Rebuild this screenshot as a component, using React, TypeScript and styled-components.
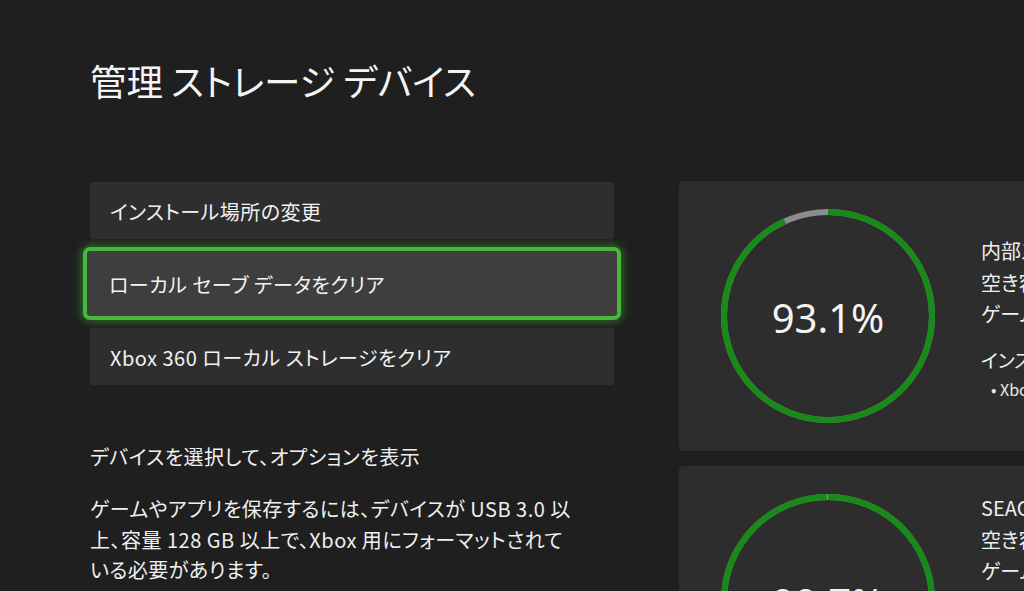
import React from "react";
import styled, { createGlobalStyle } from "styled-components";

const Global = createGlobalStyle`
  html, body { margin: 0; padding: 0; background: #1f1f1f; }
  body { font-family: "Noto Sans CJK JP", "Noto Sans", sans-serif; color: #f2f2f2; }
  #root { width: 1024px; height: 591px; overflow: hidden; }
`;

const Page = styled.div`
  width: 1024px;
  height: 591px;
  overflow: hidden;
  box-sizing: border-box;
  padding-left: 90px;
  display: flex;
  flex-direction: column;
  background: #1f1f1f;
  font-feature-settings: "palt";
`;

const Title = styled.h1`
  margin: 55px 0 0;
  font-size: 36.5px;
  font-weight: 400;
  line-height: 52px;
  color: #f4f4f4;
`;

const Content = styled.div`
  display: flex;
  gap: 65px;
  margin-top: 75px;
`;

const LeftColumn = styled.div`
  width: 524px;
  flex-shrink: 0;
  display: flex;
  flex-direction: column;
  letter-spacing: 0.5px;
`;

const ButtonList = styled.div`
  display: flex;
  flex-direction: column;
  gap: 16px;
`;

const MenuButton = styled.div<{ $focused?: boolean }>`
  box-sizing: border-box;
  height: ${(p) => (p.$focused ? 73 : 57)}px;
  margin: ${(p) => (p.$focused ? "-8px -7px" : "0")};
  padding: 2px 0 0 ${(p) => (p.$focused ? 22 : 20)}px;
  display: flex;
  align-items: center;
  border-radius: ${(p) => (p.$focused ? 7 : 3)}px;
  background: ${(p) => (p.$focused ? "#3e3e3e" : "#2e2e2e")};
  border: ${(p) => (p.$focused ? "4px solid #45b83b" : "none")};
  box-shadow: ${(p) =>
    p.$focused ? "0 0 8px 2px rgba(60, 200, 50, 0.45)" : "none"};
  font-size: 20px;
  line-height: 1;
  color: #f2f2f2;
`;

const Hint = styled.div`
  margin-top: 57px;
  font-size: 20px;
  line-height: 30px;
  color: #f0f0f0;
`;

const Paragraph = styled.p`
  margin: 22px 0 0;
  font-size: 20px;
  line-height: 30.5px;
  color: #f0f0f0;
  white-space: nowrap;
`;

const RightColumn = styled.div`
  display: flex;
  flex-direction: column;
  gap: 15px;
  margin-top: -1px;
`;

const Card = styled.div`
  width: 620px;
  height: 270px;
  flex-shrink: 0;
  box-sizing: border-box;
  background: #2d2d2d;
  border-radius: 4px;
  display: flex;
  align-items: center;
  padding-left: 42px;
  gap: 46px;
`;

const RingWrap = styled.div`
  position: relative;
  width: 214px;
  height: 214px;
  flex-shrink: 0;
`;

const RingLabel = styled.div`
  position: absolute;
  inset: 0;
  display: flex;
  align-items: center;
  justify-content: center;
  font-family: "Noto Sans", "Open Sans", sans-serif;
  font-size: 40px;
  font-weight: 400;
  color: #f4f4f4;
  padding-top: 3px;
`;

const Info = styled.div`
  display: flex;
  flex-direction: column;
  white-space: nowrap;
  padding-top: 6px;
`;

const InfoLine = styled.div`
  font-size: 20px;
  line-height: 31.5px;
  color: #f0f0f0;
`;

const InfoHeading = styled.div`
  margin-top: 15px;
  font-size: 19px;
  line-height: 30px;
  color: #f0f0f0;
`;

const Bullet = styled.div`
  font-size: 16px;
  line-height: 28px;
  padding-left: 10px;
  color: #e8e8e8;
`;

function Ring({ percent, label }: { percent: number; label: string }) {
  const r = 104;
  const c = 2 * Math.PI * r;
  const g = (percent / 100) * c;
  return (
    <RingWrap>
      <svg width="214" height="214" viewBox="0 0 214 214">
        <circle cx="107" cy="107" r={r} fill="none" stroke="#8c8c8c" strokeWidth="6" />
        <circle
          cx="107"
          cy="107"
          r={r}
          fill="none"
          stroke="#178a17"
          strokeWidth="6"
          strokeDasharray={`${g} ${c}`}
          transform="rotate(-90 107 107)"
        />
      </svg>
      <RingLabel>{label}</RingLabel>
    </RingWrap>
  );
}

export default function App() {
  return (
    <>
      <Global />
      <Page>
        <Title>管理 ストレージ デバイス</Title>
        <Content>
          <LeftColumn>
            <ButtonList>
              <MenuButton>インストール場所の変更</MenuButton>
              <MenuButton $focused>ローカル セーブ データをクリア</MenuButton>
              <MenuButton>Xbox 360 ローカル ストレージをクリア</MenuButton>
            </ButtonList>
            <Hint>デバイスを選択して、オプションを表示</Hint>
            <Paragraph>
              ゲームやアプリを保存するには、デバイスが USB 3.0 以
              <br />
              上、容量 128 GB 以上で、Xbox 用にフォーマットされて
              <br />
              いる必要があります。
            </Paragraph>
          </LeftColumn>
          <RightColumn>
            <Card>
              <Ring percent={93.1} label="93.1%" />
              <Info>
                <InfoLine>内部ストレージ</InfoLine>
                <InfoLine>空き容量 55.4 GB / 802 GB</InfoLine>
                <InfoLine>ゲームとアプリ 12 個</InfoLine>
                <InfoHeading>インストール先:</InfoHeading>
                <Bullet>• Xbox Series X|S ゲーム</Bullet>
              </Info>
            </Card>
            <Card>
              <Ring percent={99.7} label="99.7%" />
              <Info>
                <InfoLine>SEAGATE 外部ストレージ</InfoLine>
                <InfoLine>空き容量 3.2 GB / 1 TB</InfoLine>
                <InfoLine>ゲームとアプリ 48 個</InfoLine>
                <InfoHeading>インストール先:</InfoHeading>
                <Bullet>• Xbox One ゲーム</Bullet>
                <Bullet>• Xbox 360 ゲーム</Bullet>
                <Bullet>• アプリ</Bullet>
              </Info>
            </Card>
          </RightColumn>
        </Content>
      </Page>
    </>
  );
}
